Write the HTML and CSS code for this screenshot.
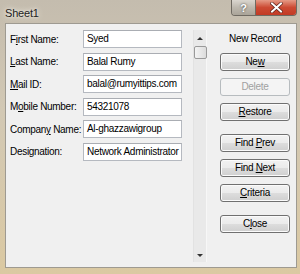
FILE: index.html
```html
<!DOCTYPE html>
<html lang="en">
<head>
    <meta charset="UTF-8">
    <title>Sheet1</title>
    <link rel="stylesheet" href="styles.css">
</head>
<body>
    <div class="window">
        <div class="titlebar">
            <span class="title">Sheet1</span>
            <div class="caption-btns">
                <div class="cap-btn help">?</div>
                <div class="cap-btn close">
                    <svg width="13" height="11" viewBox="0 0 13 11">
                        <path d="M2 1.5 L11 9.5 M11 1.5 L2 9.5" stroke="#5a2018" stroke-width="3.4" stroke-linecap="square"/>
                        <path d="M2 1.5 L11 9.5 M11 1.5 L2 9.5" stroke="#fff" stroke-width="2" stroke-linecap="square"/>
                    </svg>
                </div>
            </div>
        </div>
        <div class="client">
            <div class="fields">
                <label>F<u>i</u>rst Name:</label>
                <div class="input">Syed</div>
                <label><u>L</u>ast Name:</label>
                <div class="input">Balal Rumy</div>
                <label><u>M</u>ail ID:</label>
                <div class="input">balal@rumyittips.com</div>
                <label>M<u>o</u>bile Number:</label>
                <div class="input">54321078</div>
                <label>Compan<u>y</u> Name:</label>
                <div class="input">Al-ghazzawigroup</div>
                <label>Designation:</label>
                <div class="input">Network Administrator</div>
            </div>
            <div class="scrollbar">
                <span class="arrow up"></span>
                <span class="thumb"></span>
                <span class="track"></span>
                <span class="arrow down"></span>
            </div>
            <div class="actions">
                <div class="record">New Record</div>
                <div class="btn">Ne<u>w</u></div>
                <div class="btn disabled">Delete</div>
                <div class="btn"><u>R</u>estore</div>
                <div class="btn spaced">Find <u>P</u>rev</div>
                <div class="btn">Find <u>N</u>ext</div>
                <div class="btn"><u>C</u>riteria</div>
                <div class="btn spaced">C<u>l</u>ose</div>
            </div>
        </div>
    </div>
</body>
</html>
```

FILE: styles.css
```css
* {
    padding: 0;
    margin: 0;
    box-sizing: border-box;
}
body {
    width: 300px;
    height: 274px;
    overflow: hidden;
    font-family: "Liberation Sans", Arial, sans-serif;
    font-size: 10px;
    letter-spacing: -0.3px;
    color: #000;
}
.window {
    width: 300px;
    height: 274px;
    display: flex;
    flex-direction: column;
    background: linear-gradient(to bottom, #c4bcae 0%, #d2c8b4 40%, #dbc9a2 100%);
    padding: 0 3px 6px 5px;
}
.titlebar {
    height: 23px;
    display: flex;
    align-items: flex-start;
}
.title {
    margin-top: 7px;
    font-size: 11px;
    color: #222;
    text-shadow: 0 0 6px #f4f0e8, 0 0 3px #f4f0e8;
    letter-spacing: -0.2px;
}
.caption-btns {
    margin-left: auto;
    display: flex;
    border: 1px solid #6f6a62;
    border-top: none;
    border-radius: 0 0 4px 4px;
    overflow: hidden;
    height: 16px;
}
.cap-btn {
    height: 15px;
    display: flex;
    align-items: center;
    justify-content: center;
}
.help {
    width: 24px;
    background: linear-gradient(to bottom, #dad6cf, #bdb8ae 50%, #aaa499);
    color: #fff;
    font-weight: bold;
    font-size: 11px;
    text-shadow: 0 0 2px #333;
    border-right: 1px solid #6f6a62;
}
.close {
    width: 40px;
    background: linear-gradient(to bottom, #e59a86, #cc4a33 50%, #c23a25);
}
.client {
    flex: 1;
    display: flex;
    background-color: #f0f0f0;
    border: 1px solid #9e9a91;
    padding: 6px 6px 4px 4px;
}
.fields {
    display: grid;
    grid-template-columns: 73px 99px;
    grid-auto-rows: 18px;
    row-gap: 4.6px;
    align-items: center;
    align-self: flex-start;
}
label {
    color: #000;
    white-space: nowrap;
}
u {
    text-decoration-thickness: 1px;
}
.input {
    height: 18px;
    line-height: 16px;
    padding-left: 3px;
    background: #fff;
    border: 1px solid #b5b9c0;
    border-top-color: #aaadb3;
    white-space: nowrap;
    overflow: hidden;
}
.scrollbar {
    width: 14px;
    margin-left: 11px;
    margin-bottom: 1px;
    display: flex;
    flex-direction: column;
    align-items: center;
    background: #e9e9e9;
    border-left: 1px solid #e2e2e2;
    border-right: 1px solid #f7f7f7;
}
.arrow {
    width: 0;
    height: 0;
    border-left: 3px solid transparent;
    border-right: 3px solid transparent;
}
.arrow.up {
    margin-top: 7px;
    border-bottom: 3px solid #333;
}
.arrow.down {
    margin-bottom: 5px;
    border-top: 3px solid #333;
}
.thumb {
    width: 13px;
    height: 13px;
    margin-top: 6px;
    border: 1px solid #9a9a9a;
    border-radius: 2px;
    background: linear-gradient(to right, #f4f4f4, #dcdcdc);
}
.track {
    flex: 1;
}
.actions {
    width: 70px;
    margin-left: 13px;
    display: flex;
    flex-direction: column;
    gap: 7px;
}
.record {
    text-align: center;
    height: 12px;
    line-height: 12px;
    margin: 3px 0 1px;
}
.btn {
    height: 18px;
    line-height: 16px;
    text-align: center;
    border: 1px solid #707070;
    border-radius: 3px;
    background: linear-gradient(to bottom, #f2f2f2 0%, #ebebeb 50%, #dddddd 51%, #cfcfcf 100%);
    box-shadow: inset 0 0 0 1px #fbfbfb;
}
.btn.disabled {
    color: #a0a0a0;
    border-color: #b7bcbf;
    background: #f4f4f4;
    box-shadow: none;
}
.btn.spaced {
    margin-top: 6px;
}
```
